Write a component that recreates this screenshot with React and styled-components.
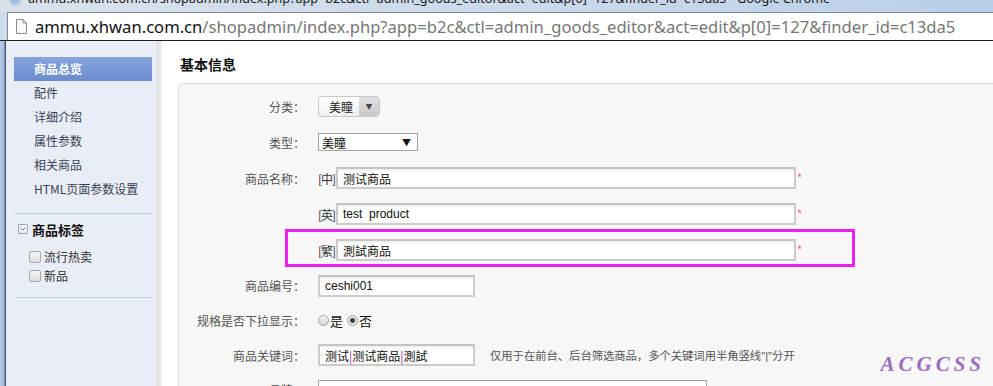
import styled, { createGlobalStyle } from "styled-components";

const Global = createGlobalStyle`
    html, body {
        margin: 0;
        padding: 0;
        background: #ffffff;
    }
    body {
        font-family: "Noto Sans CJK SC", "Liberation Sans", sans-serif;
        font-size: 12px;
    }
`

const Screen = styled.div`
    width: 993px;
    height: 386px;
    overflow: hidden;
    display: flex;
    flex-direction: column;
    position: relative;
`

const TitleBar = styled.div`
    height: 12px;
    flex-shrink: 0;
    overflow: hidden;
    background: linear-gradient(to right, #d9e2ec, #c9d8ea 60%, #b9cfe8);
    display: flex;
    align-items: flex-start;
    padding-left: 8px;
    gap: 6px;

    span {
        font-family: "Noto Sans", sans-serif;
        font-size: 12.6px;
        line-height: 14px;
        color: #1a1a1a;
        white-space: nowrap;
        margin-top: -8px;
    }
`

const AppIcon = styled.div`
    width: 14px;
    height: 14px;
    margin-top: -7px;
    border-radius: 50%;
    background: radial-gradient(circle, #7fa8d8 30%, #c8d6e6 70%);
    opacity: 0.6;
`

const AddressFrame = styled.div`
    height: 29px;
    flex-shrink: 0;
    background: #cfdbe9;
    padding-left: 7px;
    border-bottom: 1px solid #1e1e1e;
    box-sizing: border-box;
`

const AddressBox = styled.div`
    height: 100%;
    background: #ffffff;
    border-top: 1px solid #7f8a98;
    border-left: 1px solid #7f8a98;
    box-sizing: border-box;
    display: flex;
    align-items: center;
    padding-left: 8px;
    gap: 8px;
    font-family: "Noto Sans", sans-serif;
    font-size: 16.6px;
    color: #777777;
    white-space: nowrap;

    b {
        font-weight: 400;
        color: #111111;
    }
`

const Body = styled.div`
    flex: 1;
    display: flex;
    min-height: 0;
`

const Sidebar = styled.div`
    width: 162px;
    flex-shrink: 0;
    display: flex;
    background: linear-gradient(to right, #e9edf5 0, #e9edf5 156px, #dcdcdc 157px, #efefef 161px);
`

const Strip = styled.div`
    width: 6px;
    background: linear-gradient(to right, #b7cbe8, #a5bde2 4px, #4e5d77 5px);
`

const Nav = styled.div`
    width: 138px;
    padding: 16px 0 0 8px;
    display: flex;
    flex-direction: column;
`

const NavItem = styled.div`
    height: 24px;
    line-height: 24px;
    padding-left: 20px;
    font-size: 12px;
    color: ${props => props.active ? "#ffffff" : "#3a4258"};
    font-weight: ${props => props.active ? 700 : 400};
    background: ${props => props.active ? "linear-gradient(#86a4dd, #6b8bcf)" : "none"};
`

const Divider = styled.div`
    height: 1px;
    background: #c5d0e0;
    margin-top: ${props => props.top}px;
`

const TagHeader = styled.div`
    margin-top: 6px;
    height: 18px;
    display: flex;
    align-items: center;
    gap: 4px;
    padding-left: 4px;
    font-size: 13px;
    font-weight: 700;
    color: #111111;
`

const Toggle = styled.div`
    width: 8px;
    height: 8px;
    border: 1px solid #9aa6bb;
    border-radius: 1px;
    background: linear-gradient(#ffffff, #e4e8f0);
    display: flex;
    align-items: center;
    justify-content: center;
`

const CheckList = styled.div`
    padding: 9px 0 0 15px;
`

const CheckRow = styled.div`
    height: 19px;
    display: flex;
    align-items: center;
    gap: 3px;
    font-size: 12px;
    color: #333333;
`

const CheckBox = styled.span`
    width: 10px;
    height: 10px;
    border: 1px solid #a8a8a8;
    border-radius: 2px;
    background: linear-gradient(#f6f6f6, #dcdcdc);
`

const Main = styled.div`
    flex: 1;
    background: #ffffff;
    padding: 13px 0 0 16px;
    overflow: hidden;
`

const SectionTitle = styled.div`
    height: 20px;
    line-height: 20px;
    padding-left: 2px;
    font-size: 14px;
    font-weight: 700;
    color: #111111;
`

const Panel = styled.div`
    margin-top: 9px;
    margin-right: -20px;
    height: 320px;
    background: #f7f7f7;
    border: 1px solid #dddddd;
    border-radius: 5px 0 0 0;
    padding-top: 4px;
    box-sizing: border-box;
`

const Row = styled.div`
    height: ${props => props.h || 36}px;
    display: flex;
    align-items: center;
    position: relative;
`

const Label = styled.div`
    width: 126px;
    margin-right: 13px;
    text-align: right;
    font-size: 12px;
    color: #555555;
    white-space: nowrap;
`

const Combo = styled.div`
    width: 60px;
    height: 19px;
    border: 1px solid #c8c8c8;
    border-radius: 4px;
    display: flex;
    overflow: hidden;
    background: linear-gradient(#ffffff, #f0f0f0);

    span {
        flex: 1;
        line-height: 19px;
        padding-left: 10px;
        color: #222222;
    }

    i {
        width: 20px;
        background: linear-gradient(#e2e2e2, #c9c9c9);
        display: flex;
        align-items: center;
        justify-content: center;
        font-style: normal;
        font-size: 7px;
        color: #444444;
    }
`

const Select = styled.div`
    width: ${props => props.w}px;
    height: 16px;
    border: 1px solid #a3a3a3;
    background: #ffffff;
    display: flex;
    align-items: center;
    justify-content: space-between;
    padding: 0 6px 0 3px;
    box-sizing: content-box;
    font-size: 12px;
    color: #111111;

    i {
        font-style: normal;
        font-size: 9px;
    }
`

const Prefix = styled.span`
    width: 18px;
    font-size: 12px;
    color: #333333;
    white-space: nowrap;
    letter-spacing: -1px;
`

const Input = styled.div`
    width: ${props => props.w}px;
    height: 22px;
    box-sizing: border-box;
    border: 2px solid #cccccc;
    border-top-color: #c4c4c4;
    background: linear-gradient(#ececec 0, #ffffff 3px);
    padding-left: 5px;
    display: flex;
    align-items: center;
    font-size: 12px;
    color: #111111;
    font-family: ${props => props.latin ? "\"Liberation Sans\", sans-serif" : "inherit"};
    white-space: pre;

    em {
        font-style: normal;
        color: #9a2ab0;
    }
`

const Required = styled.span`
    color: #ff4d6a;
    font-size: 11px;
    margin-left: 1px;
    align-self: flex-start;
    margin-top: 9px;
`

const Highlight = styled.div`
    position: absolute;
    left: 106px;
    top: -3px;
    width: 570px;
    height: 38px;
    border: 3px solid #ee22ee;
    box-sizing: border-box;
    pointer-events: none;
`

const Radio = styled.span`
    width: 11px;
    height: 11px;
    border-radius: 50%;
    border: 1px solid #a5a5a5;
    box-sizing: border-box;
    background: ${props => props.checked
        ? "radial-gradient(circle, #444 0, #444 2px, #e8e8e8 3px)"
        : "linear-gradient(#f4f4f4, #d8d8d8)"};
`

const RadioText = styled.span`
    margin: 0 4px 0 1px;
    font-size: 13px;
    color: #111111;
`

const Hint = styled.span`
    margin-left: 15px;
    font-size: 11.3px;
    color: #555555;
    white-space: nowrap;

    q {
        quotes: none;
        font-family: "Liberation Sans", sans-serif;
    }
`

const Watermark = styled.div`
    position: absolute;
    right: 8px;
    bottom: 9px;
    font-family: "Liberation Serif", serif;
    font-style: italic;
    font-weight: 700;
    font-size: 21px;
    letter-spacing: 4px;
    color: #9b6cc0;
`

const menu = ["配件", "详细介绍", "属性参数", "相关商品", "HTML页面参数设置"];

export default function App() {
    return (
        <Screen>
            <Global />
            <TitleBar>
                <AppIcon />
                <span>ammu.xhwan.com.cn/shopadmin/index.php?app=b2c&amp;ctl=admin_goods_editor&amp;act=edit&amp;p[0]=127&amp;finder_id=c13da5 - Google Chrome</span>
            </TitleBar>
            <AddressFrame>
                <AddressBox>
                    <svg width="11" height="15" viewBox="0 0 11 15">
                        <path d="M0.5 0.5 H7 L10.5 4 V14.5 H0.5 Z" fill="#fafafa" stroke="#8a8a8a" />
                        <path d="M7 0.5 V4 H10.5" fill="none" stroke="#8a8a8a" />
                    </svg>
                    <div><b>ammu.xhwan.com.cn</b>/shopadmin/index.php?app=b2c&amp;ctl=admin_goods_editor&amp;act=edit&amp;p[0]=127&amp;finder_id=c13da5</div>
                </AddressBox>
            </AddressFrame>
            <Body>
                <Sidebar>
                    <Strip />
                    <Nav>
                        <NavItem active>商品总览</NavItem>
                        {menu.map(m => <NavItem key={m}>{m}</NavItem>)}
                        <Divider top={12} />
                        <TagHeader>
                            <Toggle>
                                <svg width="6" height="4" viewBox="0 0 6 4">
                                    <path d="M0.5 0.5 L3 3 L5.5 0.5" fill="none" stroke="#6f7c94" strokeWidth="1" />
                                </svg>
                            </Toggle>
                            商品标签
                        </TagHeader>
                        <CheckList>
                            <CheckRow><CheckBox />流行热卖</CheckRow>
                            <CheckRow><CheckBox />新品</CheckRow>
                        </CheckList>
                        <Divider top={12} />
                    </Nav>
                </Sidebar>
                <Main>
                    <SectionTitle>基本信息</SectionTitle>
                    <Panel>
                        <Row>
                            <Label>分类：</Label>
                            <Combo><span>美瞳</span><i>▼</i></Combo>
                        </Row>
                        <Row>
                            <Label>类型：</Label>
                            <Select w={89}>美瞳<i>▼</i></Select>
                        </Row>
                        <Row>
                            <Label>商品名称：</Label>
                            <Prefix>[中]</Prefix>
                            <Input w={460}>测试商品</Input>
                            <Required>*</Required>
                        </Row>
                        <Row>
                            <Label />
                            <Prefix>[英]</Prefix>
                            <Input w={460} latin>test  product</Input>
                            <Required>*</Required>
                        </Row>
                        <Row>
                            <Label />
                            <Prefix>[繁]</Prefix>
                            <Input w={460}>測試商品</Input>
                            <Required>*</Required>
                            <Highlight />
                        </Row>
                        <Row h={35}>
                            <Label>商品编号：</Label>
                            <Input w={157} latin>ceshi001</Input>
                        </Row>
                        <Row h={35}>
                            <Label>规格是否下拉显示：</Label>
                            <Radio /><RadioText>是</RadioText>
                            <Radio checked /><RadioText>否</RadioText>
                        </Row>
                        <Row h={34}>
                            <Label>商品关键词：</Label>
                            <Input w={157}>测试<em>|</em>测试商品<em>|</em>測試</Input>
                            <Hint>仅用于在前台、后台筛选商品，多个关键词用半角竖线<q>"|"</q>分开</Hint>
                        </Row>
                        <Row h={34}>
                            <Label>品牌：</Label>
                            <Select w={378}>CHARACON 1 DAY<i>▼</i></Select>
                        </Row>
                    </Panel>
                </Main>
            </Body>
            <Watermark>ACGCSS</Watermark>
        </Screen>
    );
}
